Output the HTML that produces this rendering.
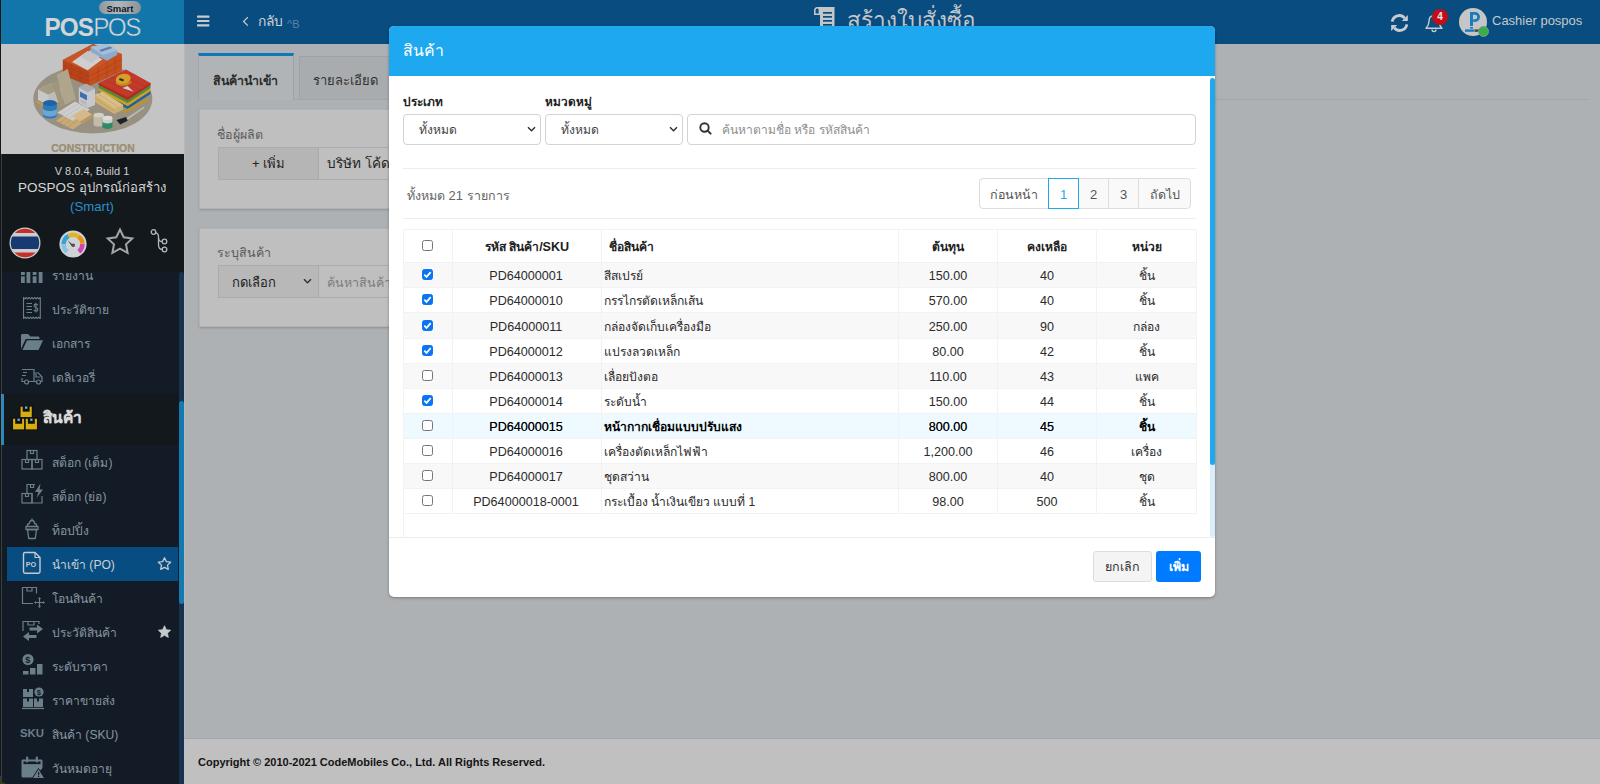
<!DOCTYPE html>
<html lang="th">
<head>
<meta charset="utf-8">
<title>POSPOS</title>
<style>
*{box-sizing:border-box;margin:0;padding:0}
html,body{width:1600px;height:784px;overflow:hidden}
body{position:relative;background:#aeb1b3;font-family:"Liberation Sans",sans-serif;font-size:13px;color:#222}
.abs{position:absolute}
/* ---------- top bar ---------- */
#topbar{position:absolute;left:184px;top:0;width:1416px;height:44px;background:#084c80}
#topbar .t{position:absolute;color:#c9ccce;white-space:nowrap}
/* ---------- sidebar ---------- */
#side{position:absolute;left:0;top:0;width:184px;height:784px;background:#131b26;overflow:hidden}
#logo{position:absolute;left:0;top:0;width:184px;height:44px;background:#1276ab}
#illus{position:absolute;left:0;top:44px;width:184px;height:110px;background:#c4c4c4;overflow:hidden}
#sinfo{position:absolute;left:0;top:154px;width:184px;height:118px;background:#12181c;z-index:3}
#sinfo div.c{position:absolute;left:0;width:184px;text-align:center;white-space:nowrap}
.mi{position:absolute;left:52px;width:120px;height:20px;line-height:20px;font-size:12.100px;color:#8796a0;white-space:nowrap;overflow:hidden}
.mi .th{font-size:100%}
.ic{position:absolute;left:19px;width:26px;height:26px}
/* ---------- content behind modal ---------- */
.card{position:absolute;background:#bfbfbf;border:1px solid #b0b2b3;box-shadow:0 1px 2px rgba(0,0,0,.18)}
/* ---------- modal ---------- */
#modal{position:absolute;left:389px;top:26px;width:826px;height:571px;background:#fff;border-radius:5px;box-shadow:0 1px 3px rgba(0,0,0,.32);overflow:hidden}
#mhead{position:absolute;left:0;top:0;width:826px;height:50px;background:#1ea8f0}
#mhead span{position:absolute;left:14px;top:13px;font-size:15.800px;line-height:24px;color:#fff;white-space:nowrap}
.lbl{position:absolute;font-weight:bold;font-size:13px;line-height:16px;color:#222;white-space:nowrap}
.sel{position:absolute;height:31px;border:1px solid #ced4da;border-radius:4px;background:#fff;font-size:12.600px;line-height:31px;color:#444;padding-left:15px;white-space:nowrap;overflow:hidden}
.hr{position:absolute;left:14px;width:793px;height:1px;background:#ececec}
table{position:absolute;left:14px;top:203px;width:793px;border-collapse:collapse;table-layout:fixed;font-size:12.600px;color:#2b2b2b}
td,th{border:1px solid #f2f2f2;height:25px;padding:2px 3px 0;text-align:center;white-space:nowrap;overflow:hidden;vertical-align:middle;line-height:16px}
th{height:33px;font-weight:bold;color:#222}
td.l,th.l{text-align:left}
td.l{padding-left:1.500px}
tr.s td{background:#f8f8f8}
tr.h td{background:#eefaff;color:#000;text-shadow:0 0 .5px rgba(0,0,0,.75)}
tr.h td .th{font-weight:bold;text-shadow:none}
.cb{display:inline-block;width:11px;height:11px;border:1px solid #767676;border-radius:2.5px;background:#fff;vertical-align:middle;position:relative;top:-2px;left:-1px}
.cb.on{border-color:#0b74f5;background:#0b74f5}
.cb.on svg{position:absolute;left:-1px;top:-1px;width:11px;height:11px}
.pg{position:absolute;top:152px;height:31px;line-height:33px;text-align:center;font-size:13px;color:#555;white-space:nowrap;overflow:hidden}
.th{font-size:96%}
</style>
</head>
<body>

<!-- ================= TOP BAR ================= -->
<div id="topbar">
  <!-- hamburger -->
  <svg class="abs" style="left:13px;top:15px" width="13" height="12" viewBox="0 0 13 12"><rect x="0" y="0.6" width="12.4" height="2.2" rx=".6" fill="#c9ccce"/><rect x="0" y="4.9" width="12.4" height="2.2" rx=".6" fill="#c9ccce"/><rect x="0" y="9.2" width="12.4" height="2.2" rx=".6" fill="#c9ccce"/></svg>
  <!-- back -->
  <svg class="abs" style="left:58px;top:16px" width="8" height="11" viewBox="0 0 8 11"><path d="M5.8 1.2 L1.6 5.4 L5.8 9.6" fill="none" stroke="#c9ccce" stroke-width="1.3"/></svg>
  <div class="t" style="left:73.500px;top:9.700px;font-size:13.800px;line-height:24px;color:#d0d2d4">กลับ</div>
  <div class="t" style="left:103px;top:16.500px;font-size:11px;line-height:14px;color:#5a83a8">^B</div>
  <!-- title -->
  <svg class="abs" style="left:629px;top:6px" width="23" height="26" viewBox="0 0 23 26"><path d="M1 4.5 C1 2.4 2.4 1 4.3 1 H21.5 V25 H7 V9 H1 Z" fill="#c3c6c8"/><path d="M4.2 2.6 C3.1 2.6 2.6 3.4 2.6 4.5 V7.4 H5.6 V4.3 C5.6 3.3 5.1 2.6 4.2 2.6 Z" fill="#084c80"/><rect x="10" y="6" width="9" height="1.7" fill="#084c80"/><rect x="10" y="10" width="9" height="1.7" fill="#084c80"/><rect x="10" y="14" width="9" height="1.7" fill="#084c80"/><rect x="10" y="18" width="9" height="1.7" fill="#084c80"/></svg>
  <div class="t" style="left:663px;top:3px;width:128px;overflow:hidden;font-size:22.500px;line-height:36px;color:#c3c6c8">สร้างใบสั่งซื้อ</div>
  <!-- refresh -->
  <svg class="abs" style="left:1206px;top:14px" width="19" height="18" viewBox="0 0 19 18"><path d="M2.2 7.6 A7 7 0 0 1 14.6 4.2" fill="none" stroke="#c9ccce" stroke-width="2.8"/><path d="M17.8 1 V7 H11.8 Z" fill="#c9ccce"/><path d="M16.8 10.4 A7 7 0 0 1 4.4 13.8" fill="none" stroke="#c9ccce" stroke-width="2.8"/><path d="M1.2 17 V11 H7.2 Z" fill="#c9ccce"/></svg>
  <!-- bell -->
  <svg class="abs" style="left:1240px;top:14px" width="20" height="19" viewBox="0 0 20 19"><path d="M10 1.6 C6.6 1.6 5 4 5 7.2 C5 11 3.6 12.6 2 14.2 H18 C16.4 12.6 15 11 15 7.2 C15 4 13.4 1.600 10 1.6 Z" fill="none" stroke="#c9ccce" stroke-width="1.4" stroke-linejoin="round"/><path d="M8 15.6 A2 2 0 0 0 12 15.6" fill="none" stroke="#c9ccce" stroke-width="1.4"/></svg>
  <div class="abs" style="left:1248px;top:9px;width:16px;height:16px;border-radius:8px;background:#c30d18;color:#e8e8e8;font-size:10px;font-weight:bold;line-height:16px;text-align:center">4</div>
  <!-- avatar -->
  <div class="abs" style="left:1275px;top:8px;width:28px;height:28px;border-radius:14px;background:#c6c6c6;overflow:hidden">
    <svg class="abs" style="left:0;top:0" width="28" height="28" viewBox="0 0 28 28"><path d="M11 4 H16 A5 5 0 0 1 16 14 H14.2 V11.2 H16 A2.2 2.2 0 0 0 16 6.800 H14 V18 H11 Z" fill="#1a7cc0"/><rect x="11" y="19" width="3" height="1.6" fill="#1a7cc0"/><rect x="6" y="21.4" width="9" height="2.4" fill="#1a7cc0"/><rect x="15.5" y="21.4" width="6" height="2.4" fill="#444"/></svg>
  </div>
  <div class="abs" style="left:1293.500px;top:26px;width:11px;height:11px;border-radius:6px;background:#3bae3f;border:1px solid #6c9ab0"></div>
  <div class="t" style="left:1308px;top:12px;font-size:13px;line-height:18px;color:#c6c9cb">Cashier pospos</div>
</div>

<!-- ================= SIDEBAR ================= -->
<div id="side">
  <div id="logo">
    <div class="abs" style="left:99px;top:1px;width:42px;height:13px;border-radius:6.500px;background:linear-gradient(90deg,#8f969b,#b4b7ba 45%,#8d9297);color:#0c1624;font-size:9.500px;font-weight:bold;line-height:15px;text-align:center">Smart</div>
    <div class="abs" style="left:44.500px;top:13.500px;height:28px;line-height:28px;transform:scaleY(1.07);transform-origin:50% 100%;font-size:24.300px;color:#d2d4d5;white-space:nowrap;letter-spacing:-.9px"><b>POS</b><span style="letter-spacing:-1.5px;color:#d8dadb;font-weight:normal;-webkit-text-stroke:.5px #1276ab">POS</span></div>
  </div>
  <div id="illus">
    <svg class="abs" style="left:0;top:0" width="184" height="110" viewBox="0 0 184 110">
      <ellipse cx="92.800" cy="55" rx="59.500" ry="34.500" fill="#989080"/>
      <!-- brick pallet -->
      <path d="M62.800 16 L92.800 0 L121.700 10 L121.700 27 L89 42 L62.800 31 Z" fill="#b8431a"/>
      <path d="M89 27.800 L121.700 10 L121.700 27 L89 42 Z" fill="#c5501f"/>
      <path d="M62.800 16 L92.800 0 L121.700 10 L89 27.800 Z" fill="#c7552a"/>
      <g stroke="#a63a15" stroke-width=".5" fill="none"><path d="M62.800 21 L89 32.600 L121.700 15.500 M62.800 26 L89 37.300 L121.700 21"/><path d="M71 19.600 V34.500 M80 23.700 V38.200 M98 23 V37.800 M107 18 V33.700 M115 13.700 V30"/></g>
      <path d="M72 18 L87.600 7 L102.400 15.200 L87.600 26.300 Z" fill="#cfcfcf"/>
      <path d="M80 12.500 L94 4 L104 9.500 L91 19 Z" fill="#c3c3c3"/>
      <path d="M90.600 2.700 L107 0 L117.200 6.400 L117.200 10.800 L107 16.700 L90.600 7.800 Z" fill="#8caacb"/>
      <path d="M90.600 2.700 L107 0 L117.200 6.400 L103 11 Z" fill="#a5bedb"/>
      <path d="M99 6 L110 2.500 L112.500 4 L101.500 7.800 Z" fill="#5f7fa8"/>
      <!-- open box (left) -->
      <path d="M38 45.600 L52.100 38.900 L62.500 44.100 L62.500 56.700 L48.400 61.100 L38 55.900 Z" fill="#c8c8c6"/>
      <path d="M38 45.600 L52.100 38.900 L62.500 44.100 L48.400 50.800 Z" fill="#a59b80"/>
      <path d="M48.400 50.800 L62.500 44.100 L62.500 56.700 L48.400 61.100 Z" fill="#bdbdbb"/>
      <path d="M36.500 56.500 L48 62.500 L47 64.500 L36 58.500 Z" fill="#c79b3c"/>
      <!-- boards -->
      <path d="M56.600 30.800 L67.700 24.900 L75.800 55.200 L64.700 61.100 Z" fill="#afa58c"/>
      <path d="M52 40 L57.500 36.500 L64.700 61.100 L60 63 Z" fill="#a0967c"/>
      <!-- roof tiles -->
      <path d="M98.700 47 L127.600 62 L150.500 47 L150.500 50 L127.600 65 L98.700 50 Z" fill="#2c5c9c"/>
      <path d="M98.700 44 L127.600 59 L150.500 44 L150.500 47 L127.600 62 L98.700 47 Z" fill="#c7a224"/>
      <path d="M98.700 41 L127.600 56 L150.500 41 L150.500 44 L127.600 59 L98.700 44 Z" fill="#548a34"/>
      <path d="M98.700 39 L126 25.600 L150.500 39 L150.500 41 L127.600 56 L98.700 41 Z" fill="#c43a2a"/>
      <path d="M98.700 39 L127.600 53 L150.500 39 L150.500 41 L127.600 56 L98.700 41 Z" fill="#a92d20"/>
      <g stroke="#a82f22" stroke-width=".5" fill="none"><path d="M105 36 L133.500 49.500 M111.500 32.800 L139.500 45.800 M118 29.500 L145 42.300"/></g>
      <ellipse cx="123.200" cy="35.200" rx="7.600" ry="5.300" fill="#d6a028" transform="rotate(-14 123.200 35.200)"/>
      <path d="M116 37.500 C119 41 127 40.500 131.500 36.500 L131 39 C127 42.500 119 43 116 39.500 Z" fill="#c08a1c"/>
      <rect x="119.500" y="34.500" width="4.500" height="2.200" fill="#2a2a2a" transform="rotate(20 121 35)"/>
      <path d="M122.400 44 L133.500 47.800 L127.600 41.900 Z" fill="#cfcfcf"/>
      <!-- lumber -->
      <path d="M95 50.800 L102.400 47.800 L123.200 61.100 L123.200 65.600 L114.300 70 L95 58.200 Z" fill="#cdaf73"/>
      <path d="M95 50.800 L102.400 47.800 L123.200 61.100 L114.300 64.500 Z" fill="#d9bf86"/>
      <g stroke="#b5975c" stroke-width=".5"><path d="M95 54.500 L114.300 67 M98 49.800 L118 62.800"/></g>
      <!-- cement bag -->
      <path d="M78.800 43.400 L86.200 39.700 L95 44.800 L95 61.100 L87.600 64.100 L78.800 58.900 Z" fill="#c6c8cc"/>
      <path d="M78.800 43.400 L86.200 39.700 L95 44.800 L87.600 48.300 Z" fill="#a9acb2"/>
      <path d="M80 47.500 L87 51.300 L87 56.500 L80 52.700 Z" fill="#3f6fae"/>
      <path d="M80.500 55 L86.500 58.300 L86.500 61.500 L80.500 58.200 Z" fill="#b4b7bd"/>
      <!-- rolls & planks -->
      <path d="M55.800 76.700 L72.800 65.600 L89.100 74.400 L72.800 85.500 Z" fill="#c8aa78"/>
      <g stroke="#b08f5c" stroke-width=".5"><path d="M59.500 79 L76 68 M63.500 81 L80 70 M67.500 83 L84 72"/></g>
      <path d="M57.300 68.500 L75 57.400 L89.900 65.600 L72.800 76.700 Z" fill="#cdcdcd"/>
      <g stroke="#b3b3b3" stroke-width=".5"><path d="M61 70.500 L78.500 59.500 M65 72.500 L82.500 61.500 M69 74.500 L86 63.500"/></g>
      <path d="M72 72 L84 65 L92 70.500 L80 77.500 Z" fill="#d6b98a"/>
      <path d="M80 77.500 L92 70.500 L94 73 L83 80 Z" fill="#b99765"/>
      <!-- paint bucket -->
      <path d="M43 59 L43 71.500 C43 75.500 56.900 75.500 56.900 71.500 L56.900 59 Z" fill="#2e7ab8"/>
      <path d="M43 64 L43 69.500 C43 73.500 56.900 73.500 56.900 69.500 L56.900 64 C56.900 68 43 68 43 64 Z" fill="#6aa7d4"/>
      <ellipse cx="49.950" cy="59" rx="6.950" ry="3" fill="#1d64a4"/>
      <!-- cans -->
      <path d="M93.600 71 L93.600 80.500 C93.600 83.300 103.900 83.300 103.900 80.500 L103.900 71 Z" fill="#c4bca8"/>
      <ellipse cx="98.750" cy="71" rx="5.150" ry="2.300" fill="#d2d0c8"/>
      <path d="M102.400 74 L102.400 82.800 C102.400 85.600 112.500 85.600 112.500 82.800 L112.500 74 Z" fill="#2c8a68"/>
      <path d="M102.400 74 L102.400 77.500 C102.400 80 112.500 80 112.500 77.500 L112.500 74 Z" fill="#cfcfc9"/>
      <ellipse cx="107.450" cy="74" rx="5.050" ry="2.200" fill="#dcdcd6"/>
      <!-- level & saw -->
      <path d="M123.200 67.300 L148 54.200 L148.800 56.200 L124 69.500 Z" fill="#be961e"/>
      <path d="M126 74.500 L144 62.500 L144.500 64 L128 75.500 Z" fill="#b9b9b9"/>
      <path d="M116.500 75.900 L126.100 73 L127.600 76.700 L120.200 80.400 Z" fill="#202326"/>
    </svg>
    <div class="abs" style="left:0;top:98px;width:186px;text-align:center;font-size:11.400px;line-height:12px;font-weight:bold;color:#9b9178;white-space:nowrap"><span id="cons" style="display:inline-block;transform:scaleX(.91);transform-origin:50% 50%;text-shadow:0 0 .6px #9b9178">CONSTRUCTION</span></div>
  </div>
  <div id="sinfo">
    <div class="c" style="top:10px;font-size:11px;line-height:14px;color:#cfcfcf">V 8.0.4, Build 1</div>
    <div class="c" style="top:25px;font-size:13.500px;line-height:18px;color:#d6d6d6;overflow:hidden">POSPOS <span style="font-size:13.100px">อุปกรณ์ก่อสร้าง</span></div>
    <div class="c" style="top:44px;font-size:13.200px;line-height:18px;color:#2b8fca">(Smart)</div>
    <!-- flag -->
    <svg class="abs" style="left:8.700px;top:73px" width="32" height="32" viewBox="0 0 32 32"><defs><clipPath id="fc"><circle cx="16" cy="16" r="14.200"/></clipPath></defs><circle cx="16" cy="16" r="15.500" fill="#c9c9c9"/><g clip-path="url(#fc)"><rect x="0" y="0" width="32" height="32" fill="#cdcdcd"/><rect x="0" y="1" width="32" height="5" fill="#c43028"/><rect x="0" y="25.500" width="32" height="6" fill="#c43028"/><rect x="0" y="9.500" width="32" height="12.500" fill="#173a73"/></g></svg>
    <!-- gauge -->
    <svg class="abs" style="left:59px;top:76px" width="28" height="28" viewBox="0 0 28 28"><circle cx="14" cy="14" r="13.600" fill="#d0d3d5"/><path d="M6.86 23.44 A11.6 11.6 0 0 1 2.40 14.50 L6.80 14.43 A7.2 7.2 0 0 0 9.57 19.97 Z" fill="#84c4e4"/><path d="M2.40 14.10 A11.6 11.6 0 0 1 8.55 4.06 L10.62 7.94 A7.2 7.2 0 0 0 6.80 14.17 Z" fill="#3aa2d2"/><path d="M8.91 3.87 A11.6 11.6 0 0 1 20.15 4.46 L17.82 8.19 A7.2 7.2 0 0 0 10.84 7.83 Z" fill="#e4b41c"/><path d="M20.49 4.68 A11.6 11.6 0 0 1 25.57 13.49 L21.18 13.80 A7.2 7.2 0 0 0 18.03 8.33 Z" fill="#e8900f"/><path d="M25.59 13.90 A11.6 11.6 0 0 1 21.14 23.44 L18.43 19.97 A7.2 7.2 0 0 0 21.20 14.05 Z" fill="#d243b5"/><path d="M14.900 15.500 L8.600 10.200 L13 16.400 Z" fill="#34495e"/><circle cx="14.300" cy="15.300" r="1.700" fill="#34495e"/><circle cx="14.300" cy="15.300" r=".800" fill="#d8442c"/></svg>
    <!-- star -->
    <svg class="abs" style="left:105px;top:73px" width="30" height="28" viewBox="0 0 30 28"><path d="M15 2.500 L18.700 10.300 L27.300 11.400 L21 17.300 L22.600 25.800 L15 21.700 L7.400 25.800 L9 17.300 L2.700 11.400 L11.300 10.300 Z" fill="none" stroke="#a2a5a7" stroke-width="2" stroke-linejoin="miter"/></svg>
    <!-- branch -->
    <svg class="abs" style="left:149px;top:73px" width="22" height="28" viewBox="0 0 22 28"><g fill="none" stroke="#b4b7b9" stroke-width="1.300"><circle cx="4.500" cy="5" r="2.300"/><circle cx="15.500" cy="14.500" r="2.300"/><circle cx="15.500" cy="22.500" r="2.300"/><path d="M6.600 5.600 C10 6.500 9.500 9 9.500 11 C9.500 13.500 11 14.500 13.200 14.500"/><path d="M9.500 11 V17.500 C9.500 21 11 22.500 13.200 22.500"/></g></svg>
  </div>
  <!-- MENU -->
  <div id="menu">
  <div class="abs" style="left:0;top:394px;width:179px;height:51px;background:#12181c"></div>
  <div class="abs" style="left:1px;top:394px;width:3px;height:51px;background:#2b87bd"></div>
  <svg class="abs" style="left:10px;top:404px" width="30" height="28" viewBox="0 0 26 24"><g stroke="#111" stroke-width="1.300" fill="#d7ae10"><rect x="8.500" y="1.500" width="11" height="10.500"/><rect x="2" y="12" width="11" height="10.500"/><rect x="13" y="12" width="11" height="10.500"/></g><g fill="#111"><rect x="11" y="1.500" width="6" height="5"/><rect x="4.500" y="12" width="6" height="5"/><rect x="15.500" y="12" width="6" height="5"/></g><g fill="#58b7e8"><rect x="13" y="2" width="2" height="2"/><rect x="6.500" y="12.500" width="2" height="2"/><rect x="17.500" y="12.500" width="2" height="2"/></g></svg>
  <div class="abs" style="left:43px;top:406px;height:24px;line-height:24px;font-size:15.500px;font-weight:bold;color:#d9d9d9;white-space:nowrap;text-shadow:0 0 1px #d9d9d9">สินค้า</div>
  <div class="abs" style="left:7px;top:547px;width:171px;height:34px;background:#074d81"></div>
  <svg class="ic" style="top:261px" viewBox="0 0 26 26"><g fill="#6b7f89"><rect x="2" y="15.300" width="3.800" height="6.700"/><rect x="2" y="11" width="3.800" height="3"/><rect x="7.500" y="10" width="3.800" height="12"/><rect x="7.500" y="5.700" width="3.800" height="3"/><rect x="13.700" y="15.300" width="3.800" height="6.700"/><rect x="13.700" y="11" width="3.800" height="3"/><rect x="19.700" y="7" width="3.800" height="15"/><rect x="19.700" y="2.700" width="3.800" height="3"/></g></svg><div class="mi" style="top:266px"><span class="th">รายงาน</span></div>
  <svg class="ic" style="top:295px" viewBox="0 0 26 26"><path d="M4.500 2.500 l1.400 1.300 l1.400 -1.300 l1.400 1.300 l1.400 -1.300 l1.400 1.300 l1.400 -1.300 l1.400 1.300 l1.400 -1.300 l1.400 1.300 l1.400 -1.300 l1.400 1.300 l1.400 -1.300 V23.500 l-1.400 -1.300 l-1.400 1.300 l-1.400 -1.300 l-1.400 1.300 l-1.400 -1.300 l-1.400 1.300 l-1.400 -1.300 l-1.400 1.300 l-1.400 -1.300 l-1.400 1.300 l-1.400 -1.300 l-1.400 1.300 Z" fill="none" stroke="#6b7f89" stroke-width="1.100" stroke-linejoin="round"/><g stroke="#6b7f89" stroke-width="1.100"><path d="M7.500 8.500h5.500M7.500 11.500h5.500M7.500 14.500h5.500M7.500 17.500h5.500"/></g><path d="M18.800 10.300 C18.300 9.400 17.600 9.100 16.800 9.100 C15.700 9.100 15 9.700 15 10.700 C15 13 18.900 12 18.900 14.400 C18.900 15.500 18 16.100 16.900 16.100 C15.900 16.100 15.200 15.700 14.800 14.800 M16.900 7.800 V17.500" fill="none" stroke="#6b7f89" stroke-width="1.100"/></svg><div class="mi" style="top:300px"><span class="th">ประวัติขาย</span></div>
  <svg class="ic" style="top:329px" viewBox="0 0 26 26"><path d="M2 20 V6.500 C2 5.600 2.600 5 3.500 5 H9 L11.500 7.500 H19 C20 7.500 20.500 8.100 20.500 9 V10 H8 C7 10 6.400 10.500 6 11.500 Z" fill="#6b7f89"/><path d="M3.500 21 L7.500 12.200 C7.800 11.600 8.200 11.300 9 11.300 H24 L20 20 C19.700 20.700 19.300 21 18.500 21 Z" fill="#6b7f89"/></svg><div class="mi" style="top:334px"><span class="th">เอกสาร</span></div>
  <svg class="ic" style="top:363px" viewBox="0 0 26 26"><g fill="none" stroke="#6b7f89" stroke-width="1.200"><path d="M3 6.500 H15 V18.500 H9.500 M5.500 18.500 H3 V15"/><path d="M15 10 H19.500 L23 14 V18.500 H21.500 M17.500 18.500 H15"/><circle cx="7.500" cy="19" r="2"/><circle cx="19.500" cy="19" r="2"/><path d="M4 9.500h4M3 12.500h4M17 11 v3 h4.500"/></g></svg><div class="mi" style="top:368px"><span class="th">เดลิเวอรี่</span></div>
  <svg class="ic" style="top:448px" viewBox="0 0 26 26"><g fill="none" stroke="#6b7f89" stroke-width="1.200"><rect x="8" y="2.500" width="10" height="9"/><rect x="3" y="11.500" width="10" height="9.500"/><rect x="13" y="11.500" width="10" height="9.500"/><path d="M11.500 2.500v3h3v-3M6.500 11.500v3h3v-3M16.500 11.500v3h3v-3"/></g></svg><div class="mi" style="top:453px"><span class="th">สต็อก</span> (<span class="th">เต็ม</span>)</div>
  <svg class="ic" style="top:482px" viewBox="0 0 26 26"><g fill="none" stroke="#6b7f89" stroke-width="1.200"><path d="M16 2.500 H8 V11.500"/><rect x="3" y="11.500" width="10" height="9.500"/><path d="M13 11.500 V21 H23 V14"/><path d="M11.500 2.500v3h3v-3M6.500 11.500v3h3v-3"/></g><path d="M21.500 1.500 L16 10 H19.500 L17.500 16 L24 7.500 H20.500 Z" fill="#6b7f89"/></svg><div class="mi" style="top:487px"><span class="th">สต็อก</span> (<span class="th">ย่อ</span>)</div>
  <svg class="ic" style="top:516px" viewBox="0 0 26 26"><g fill="none" stroke="#6b7f89" stroke-width="1.300" stroke-linejoin="round"><path d="M8.500 13.500 H17.500 L16.300 22.500 H9.700 Z"/><path d="M7 10.500 H19 V13.500 H7 Z"/><path d="M8.500 10.500 C8 8.500 9 7.500 10.500 7.500 C10.500 5.500 11.500 4.500 13 4.500 C14.500 4.500 15.500 5.500 15.500 7.500 C17 7.500 18 8.500 17.500 10.500"/><path d="M13 4.500 V2.500"/></g></svg><div class="mi" style="top:521px"><span class="th">ท็อปปิ้ง</span></div>
  <svg class="ic" style="top:550px" viewBox="0 0 26 26"><path d="M6 2.500 H16 L21 7.500 V21.500 C21 22.600 20.500 23.200 19.500 23.200 H6 C5 23.200 4.500 22.600 4.500 21.500 V4 C4.500 3 5 2.500 6 2.500 Z" fill="none" stroke="#c6cacd" stroke-width="1.400" stroke-linejoin="round"/><path d="M16 2.500 V7.500 H21" fill="none" stroke="#c6cacd" stroke-width="1.200"/><text x="6.700" y="17.300" font-size="7.200" font-family="Liberation Sans" font-weight="bold" fill="#c6cacd">PO</text></svg><div class="mi" style="top:555px;color:#cdd1d4"><span class="th">นำเข้า</span> (PO)</div>
  <svg class="ic" style="top:584px" viewBox="0 0 26 26"><g fill="none" stroke="#6b7f89" stroke-width="1.200"><path d="M17.500 9.500 V3.500 H3.500 V19.500 H14"/><path d="M8 3.500 V7 H13 V3.500"/><path d="M20.500 14.500 V22.500 M16.500 18.500 H24.500"/></g><path d="M20.500 13 l1.600 2 h-3.200 Z M20.500 24 l1.600 -2 h-3.200 Z M15 18.500 l2 -1.600 v3.200 Z M26 18.500 l-2 -1.600 v3.200 Z" fill="#6b7f89"/></svg><div class="mi" style="top:589px"><span class="th">โอนสินค้า</span></div>
  <svg class="ic" style="top:618px" viewBox="0 0 26 26"><g fill="none" stroke="#6b7f89" stroke-width="1.200"><path d="M4 13 V3.500 H20 V6"/><path d="M9 3.500 V7 H15 V3.500"/></g><path d="M10.500 9.500 H18 V6.500 L24 11 L18 15.500 V12.500 H10.500 Z" fill="#6b7f89"/><path d="M17.500 17 H10 V14 L4 18.500 L10 23 V20 H17.500 Z" fill="#6b7f89"/></svg><div class="mi" style="top:623px"><span class="th">ประวัติสินค้า</span></div>
  <svg class="ic" style="top:652px" viewBox="0 0 26 26"><circle cx="9" cy="7.500" r="5.600" fill="#6b7f89"/><text x="6.300" y="10.700" font-size="9" font-family="Liberation Sans" font-weight="bold" fill="#131b26">$</text><g fill="#6b7f89"><rect x="4" y="19" width="5.500" height="3.500"/><rect x="11" y="16" width="5.500" height="6.500"/><rect x="18" y="12" width="5.500" height="10.500"/></g></svg><div class="mi" style="top:657px"><span class="th">ระดับราคา</span></div>
  <svg class="ic" style="top:686px" viewBox="0 0 26 26"><g fill="#6b7f89"><path d="M4 3 H8 V6 H10 V3 H14 V11 H4 Z"/><path d="M4 12.500 H8 V15.500 H10 V12.500 H14 V21 H4 Z"/><path d="M15 12.500 H18 V15.500 H20 V12.500 H24 V21 H15 Z"/><rect x="3" y="21.800" width="22" height="1.300"/><circle cx="20" cy="6" r="4.600"/></g><text x="17.800" y="8.700" font-size="7.500" font-family="Liberation Sans" font-weight="bold" fill="#131b26">$</text></svg><div class="mi" style="top:691px"><span class="th">ราคาขายส่ง</span></div>
  <svg class="ic" style="top:720px" viewBox="0 0 26 26"><text x="1" y="17" font-size="10.500" font-family="Liberation Sans" font-weight="bold" fill="#6b7f89" textLength="24" lengthAdjust="spacingAndGlyphs">SKU</text></svg><div class="mi" style="top:725px"><span class="th">สินค้า</span> (SKU)</div>
  <svg class="ic" style="top:754px" viewBox="0 0 26 26"><path d="M4 5.500 H22 C23 5.500 23.500 6.100 23.500 7 V14 L15 23.500 H4 C3 23.500 2.500 22.900 2.500 22 V7 C2.500 6.100 3 5.500 4 5.500 Z" fill="#6b7f89"/><rect x="4.500" y="7.500" width="17" height="2.600" fill="#131b26"/><rect x="7" y="2.500" width="2.300" height="6" rx="1" fill="#6b7f89"/><rect x="16.700" y="2.500" width="2.300" height="6" rx="1" fill="#6b7f89"/><path d="M19.500 14.500 L25.800 24.500 H13.200 Z" fill="#6b7f89" stroke="#131b26" stroke-width="1"/><rect x="19" y="18" width="1.200" height="3.300" fill="#131b26"/><rect x="19" y="22" width="1.200" height="1.200" fill="#131b26"/></svg><div class="mi" style="top:759px"><span class="th">วันหมดอายุ</span></div>
  <svg class="abs" style="left:157px;top:556px" width="15" height="15" viewBox="0 0 30 28"><path d="M15 2.500 L18.700 10.300 L27.300 11.400 L21 17.300 L22.600 25.800 L15 21.700 L7.400 25.800 L9 17.300 L2.700 11.400 L11.300 10.300 Z" fill="none" stroke="#c6cacd" stroke-width="2.600" stroke-linejoin="round"/></svg>
  <svg class="abs" style="left:157px;top:624px" width="15" height="15" viewBox="0 0 30 28"><path d="M15 2.500 L18.700 10.300 L27.300 11.400 L21 17.300 L22.600 25.800 L15 21.700 L7.400 25.800 L9 17.300 L2.700 11.400 L11.300 10.300 Z" fill="#c6cacd" stroke="#c6cacd" stroke-width="1.500" stroke-linejoin="round"/></svg>
  </div><!--/menu-->
  <!-- scrollbar -->
  <div class="abs" style="left:179px;top:272px;width:5px;height:512px;background:#16324e;border-radius:2.500px 2.500px 0 0"></div>
  <div class="abs" style="left:179px;top:401px;width:5px;height:203px;background:#137ab1;border-radius:2.500px"></div>
  <!-- window edge -->
  <div class="abs" style="left:0;top:0;width:1px;height:784px;background:#17170f;z-index:5"></div><div class="abs" style="left:1px;top:154px;width:1px;height:630px;background:rgba(120,135,150,.35);z-index:5"></div><svg class="abs" style="left:0;top:776px;z-index:6" width="8" height="8" viewBox="0 0 8 8"><path d="M0 0 V8 H8 C3 8 1 5 1 0 Z" fill="#3a3a1c"/></svg>
</div>

<!-- ================= CONTENT ================= -->
<div id="content">
  <div class="abs" style="left:184px;top:44px;width:1px;height:740px;background:#b6b9bb"></div>
  <!-- tabs -->
  <div class="abs" style="left:198px;top:99px;width:1391px;height:1px;background:#a2a5a7"></div>
  <div class="abs" style="left:198px;top:53px;width:96px;height:47px;background:#b1b4b6;border-left:1px solid #a4a7a9;border-right:1px solid #a0a3a5;border-top:3px solid #0d78ba"></div>
  <div class="abs" style="left:213px;top:71px;width:70px;height:20px;line-height:20px;font-size:12.400px;font-weight:bold;color:#2c2c2c;white-space:nowrap;overflow:hidden">สินค้านำเข้า</div>
  <div class="abs" style="left:299px;top:56px;width:100px;height:43px;background:#a9acae;border:1px solid #a0a3a5;border-bottom:none"></div>
  <div class="abs" style="left:313px;top:71px;width:70px;height:20px;line-height:20px;font-size:13px;color:#333;white-space:nowrap;overflow:hidden">รายละเอียด</div>
  <!-- card 1 -->
  <div class="card" style="left:199px;top:109px;width:700px;height:100px"></div>
  <div class="abs" style="left:217px;top:125.500px;height:18px;line-height:18px;font-size:12.500px;color:#5b5b5b;white-space:nowrap">ชื่อผู้ผลิต</div>
  <div class="abs" style="left:218px;top:147px;width:101px;height:33px;background:#b5b5b5;border:1px solid #a9abb2"></div>
  <div class="abs" style="left:318px;top:147px;width:100px;height:33px;background:#bfbfbf;border:1px solid #a9abb2"></div>
  <div class="abs" style="left:218px;top:155px;width:101px;text-align:center;height:18px;line-height:18px;font-size:13px;color:#222;white-space:nowrap">+ เพิ่ม</div>
  <div class="abs" style="left:327px;top:155px;width:62px;height:18px;line-height:18px;font-size:13.500px;color:#222;white-space:nowrap;overflow:hidden">บริษัท โค้ดโมบายส์</div>
  <!-- card 2 -->
  <div class="card" style="left:199px;top:228px;width:700px;height:99px"></div>
  <div class="abs" style="left:217px;top:243.500px;height:18px;line-height:18px;font-size:12.500px;color:#5b5b5b;white-space:nowrap">ระบุสินค้า</div>
  <div class="abs" style="left:218px;top:265px;width:101px;height:33px;background:#b8b8b8;border:1px solid #a9abb2"></div>
  <div class="abs" style="left:318px;top:265px;width:100px;height:33px;background:#bfbfbf;border:1px solid #a9abb2"></div>
  <div class="abs" style="left:232px;top:273.500px;height:18px;line-height:18px;font-size:13px;color:#222;white-space:nowrap">กดเลือก</div>
  <svg class="abs" style="left:303px;top:278px" width="9" height="7" viewBox="0 0 9 7"><path d="M1 1.300 L4.500 4.800 L8 1.300" fill="none" stroke="#333" stroke-width="1.500"/></svg>
  <div class="abs" style="left:327px;top:273.500px;width:62px;height:18px;line-height:18px;font-size:12.500px;color:#7d7d7d;white-space:nowrap;overflow:hidden">ค้นหาสินค้า</div>
  <!-- footer -->
  <div class="abs" style="left:184px;top:738px;width:1416px;height:46px;background:#c0c0c0;border-top:1px solid #a3a7b6"></div>
  <div class="abs" style="left:198px;top:755px;height:14px;line-height:14px;font-size:11px;font-weight:bold;color:#141414;white-space:nowrap">Copyright © 2010-2021 CodeMobiles Co., Ltd. All Rights Reserved.</div>
</div>

<!-- ================= MODAL ================= -->
<div id="modal">
  <div id="mhead"><span>สินค้า</span></div>
  <!--mbody-->
  <div class="lbl" style="left:14px;top:68px"><span class="th" style="font-size:91%">ประเภท</span></div>
  <div class="lbl" style="left:156px;top:68px"><span class="th" style="font-size:91%">หมวดหมู่</span></div>
  <div class="sel" style="left:14px;top:88px;width:138px"><span class="th">ทั้งหมด</span><svg class="abs" style="right:4px;top:11px" width="9" height="7" viewBox="0 0 9 7"><path d="M1 1.300 L4.500 4.800 L8 1.300" fill="none" stroke="#333" stroke-width="1.500"/></svg></div>
  <div class="sel" style="left:156px;top:88px;width:138px"><span class="th">ทั้งหมด</span><svg class="abs" style="right:4px;top:11px" width="9" height="7" viewBox="0 0 9 7"><path d="M1 1.300 L4.500 4.800 L8 1.300" fill="none" stroke="#333" stroke-width="1.500"/></svg></div>
  <div class="sel" style="left:298px;top:88px;width:509px;padding-left:34px;color:#8f8f8f"><svg class="abs" style="left:11px;top:6.500px" width="13" height="13" viewBox="0 0 13 13"><circle cx="5.500" cy="5.500" r="4.200" fill="none" stroke="#333" stroke-width="1.900"/><path d="M8.600 8.600 L11.600 11.600" stroke="#333" stroke-width="2" stroke-linecap="round"/></svg><span class="th">ค้นหาตามชื่อ หรือ รหัสสินค้า</span></div>
  <div class="hr" style="top:142px"></div>
  <div class="abs" style="left:18px;top:161px;height:18px;line-height:18px;font-size:13px;color:#666;white-space:nowrap"><span class="th">ทั้งหมด</span> 21 <span class="th">รายการ</span></div>
  <div class="abs" style="left:590px;top:152px;width:212px;height:31px;border:1px solid #ddd;border-radius:4px;background:#f9f9f9"></div>
  <div class="pg" style="left:590px;width:70px;background:#fff;border:1px solid #ddd;border-radius:4px 0 0 4px;line-height:31px"><span class="th">ก่อนหน้า</span></div>
  <div class="pg" style="left:659px;width:31px;background:#fff;border:1px solid #1ea8f0;color:#1ea8f0;line-height:31px;z-index:2">1</div>
  <div class="pg" style="left:690px;width:30px;border-right:1px solid #ddd">2</div>
  <div class="pg" style="left:720px;width:30px;border-right:1px solid #ddd">3</div>
  <div class="pg" style="left:749px;width:53px"><span class="th">ถัดไป</span></div>
  <div class="hr" style="top:192px"></div>
  <table><colgroup><col style="width:49px"><col style="width:149px"><col style="width:297px"><col style="width:99px"><col style="width:99px"><col style="width:100px"></colgroup>
  <tr><th><span class="cb"></span></th><th><span class="th">รหัส สินค้า</span>/SKU</th><th class="l" style="padding-left:7px"><span class="th">ชื่อสินค้า</span></th><th><span class="th">ต้นทุน</span></th><th><span class="th">คงเหลือ</span></th><th><span class="th">หน่วย</span></th></tr>
  <tr class="s"><td><span class="cb on"><svg viewBox="0 0 11 11"><path d="M2.300 5.700 L4.500 7.900 L8.700 3.100" fill="none" stroke="#fff" stroke-width="1.700"/></svg></span></td><td style="padding-right:5px">PD64000001</td><td class="l"><span class="th">สีสเปรย์</span></td><td>150.00</td><td>40</td><td><span class="th">ชิ้น</span></td></tr>
  <tr><td><span class="cb on"><svg viewBox="0 0 11 11"><path d="M2.300 5.700 L4.500 7.900 L8.700 3.100" fill="none" stroke="#fff" stroke-width="1.700"/></svg></span></td><td style="padding-right:5px">PD64000010</td><td class="l"><span class="th">กรรไกรตัดเหล็กเส้น</span></td><td>570.00</td><td>40</td><td><span class="th">ชิ้น</span></td></tr>
  <tr class="s" style="height:26px"><td><span class="cb on"><svg viewBox="0 0 11 11"><path d="M2.300 5.700 L4.500 7.900 L8.700 3.100" fill="none" stroke="#fff" stroke-width="1.700"/></svg></span></td><td style="padding-right:5px">PD64000011</td><td class="l"><span class="th">กล่องจัดเก็บเครื่องมือ</span></td><td>250.00</td><td>90</td><td><span class="th">กล่อง</span></td></tr>
  <tr><td><span class="cb on"><svg viewBox="0 0 11 11"><path d="M2.300 5.700 L4.500 7.900 L8.700 3.100" fill="none" stroke="#fff" stroke-width="1.700"/></svg></span></td><td style="padding-right:5px">PD64000012</td><td class="l"><span class="th">แปรงลวดเหล็ก</span></td><td>80.00</td><td>42</td><td><span class="th">ชิ้น</span></td></tr>
  <tr class="s"><td><span class="cb"></span></td><td style="padding-right:5px">PD64000013</td><td class="l"><span class="th">เลื่อยปังตอ</span></td><td>110.00</td><td>43</td><td><span class="th">แพค</span></td></tr>
  <tr><td><span class="cb on"><svg viewBox="0 0 11 11"><path d="M2.300 5.700 L4.500 7.900 L8.700 3.100" fill="none" stroke="#fff" stroke-width="1.700"/></svg></span></td><td style="padding-right:5px">PD64000014</td><td class="l"><span class="th">ระดับน้ำ</span></td><td>150.00</td><td>44</td><td><span class="th">ชิ้น</span></td></tr>
  <tr class="h"><td><span class="cb"></span></td><td style="padding-right:5px">PD64000015</td><td class="l"><span class="th">หน้ากากเชื่อมแบบปรับแสง</span></td><td>800.00</td><td>45</td><td><span class="th">ชิ้น</span></td></tr>
  <tr><td><span class="cb"></span></td><td style="padding-right:5px">PD64000016</td><td class="l"><span class="th">เครื่องตัดเหล็กไฟฟ้า</span></td><td>1,200.00</td><td>46</td><td><span class="th">เครื่อง</span></td></tr>
  <tr class="s"><td><span class="cb"></span></td><td style="padding-right:5px">PD64000017</td><td class="l"><span class="th">ชุดสว่าน</span></td><td>800.00</td><td>40</td><td><span class="th">ชุด</span></td></tr>
  <tr><td><span class="cb"></span></td><td style="padding-right:5px">PD64000018-0001</td><td class="l"><span class="th">กระเบื้อง น้ำเงินเขียว แบบที่ 1</span></td><td>98.00</td><td>500</td><td><span class="th">ชิ้น</span></td></tr>
  </table>
  <div class="abs" style="left:14px;top:488px;width:1px;height:23px;background:#f2f2f2"></div>
  <div class="abs" style="left:0;top:511px;width:826px;height:1px;background:#ececec"></div>
  <div class="abs" style="left:704px;top:525px;width:59px;height:31px;border:1px solid #ddd;border-radius:3px;background:#f4f4f4;color:#333;font-size:13px;line-height:29px;text-align:center;white-space:nowrap"><span class="th">ยกเลิก</span></div>
  <div class="abs" style="left:767px;top:525px;width:45px;height:31px;border-radius:3px;background:#007bff;color:#fff;font-size:13px;font-weight:bold;line-height:31px;text-align:center;white-space:nowrap"><span class="th">เพิ่ม</span></div>
  <div class="abs" style="left:821px;top:52px;width:5px;height:459px;background:#d8eefb;border-radius:2.500px"></div>
  <div class="abs" style="left:821px;top:52px;width:5px;height:387px;background:#1ea8f0;border-radius:2.500px"></div>
  <!--/mbody-->
</div>

</body>
</html>
